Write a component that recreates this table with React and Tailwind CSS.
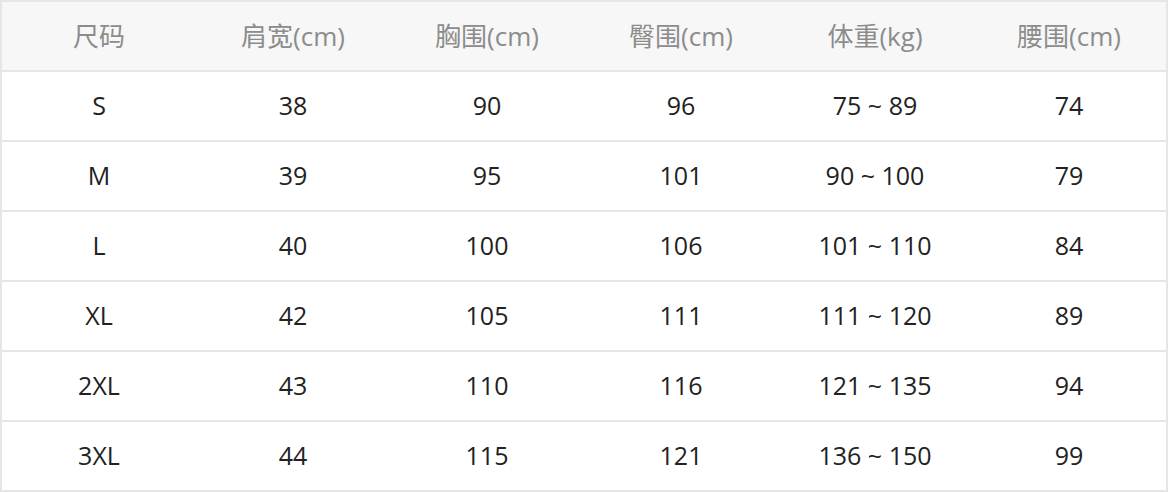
import React from "react";

const headers = ["尺码", "肩宽(cm)", "胸围(cm)", "臀围(cm)", "体重(kg)", "腰围(cm)"];
const rows = [
  ["S", "38", "90", "96", "75 ~ 89", "74"],
  ["M", "39", "95", "101", "90 ~ 100", "79"],
  ["L", "40", "100", "106", "101 ~ 110", "84"],
  ["XL", "42", "105", "111", "111 ~ 120", "89"],
  ["2XL", "43", "110", "116", "121 ~ 135", "94"],
  ["3XL", "44", "115", "121", "136 ~ 150", "99"],
];

export default function App() {
  return (
    <div
      className="w-[1168px] h-[492px] bg-white"
      style={{ fontFamily: '"Open Sans", "Noto Sans CJK SC", sans-serif' }}
    >
      <div className="border-2 border-[#e6e6e6] flex flex-col">
        <div className="grid grid-cols-6 h-[68px] bg-[#f7f7f7] border-b-2 border-[#e6e6e6] box-content">
          {headers.map((h) => (
            <div key={h} className="flex items-center justify-center text-[26px] text-[#8c8c8c]">
              {h}
            </div>
          ))}
        </div>
        {rows.map((r, i) => (
          <div
            key={i}
            className={`grid grid-cols-6 h-[68px] box-content ${i < rows.length - 1 ? "border-b-2 border-[#e6e6e6]" : ""}`}
          >
            {r.map((c, j) => (
              <div key={j} className="flex items-center justify-center text-[25px] text-[#222222]">
                {c}
              </div>
            ))}
          </div>
        ))}
      </div>
    </div>
  );
}
